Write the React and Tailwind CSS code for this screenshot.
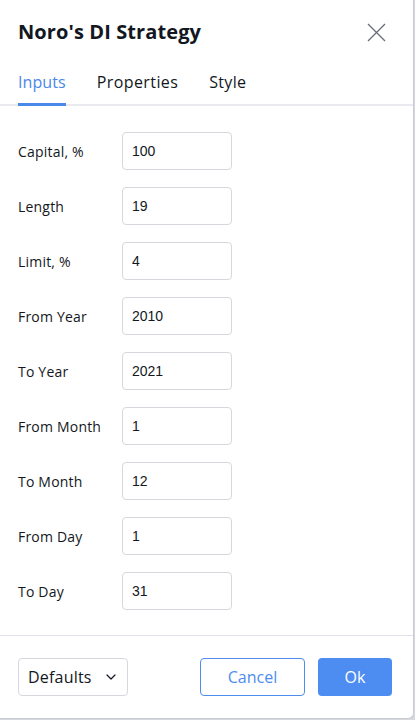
import { ChevronDown } from 'lucide-react';

const rows = [
  ['Capital, %', '100'],
  ['Length', '19'],
  ['Limit, %', '4'],
  ['From Year', '2010'],
  ['To Year', '2021'],
  ['From Month', '1'],
  ['To Month', '12'],
  ['From Day', '1'],
  ['To Day', '31'],
];

export default function App() {
  return (
    <div className="w-[415px] h-[720px] bg-[#d6d8de] overflow-hidden" style={{ fontFamily: '"Open Sans", "Noto Sans", sans-serif' }}>
      <div className="w-[414px] h-[719px] bg-white border-r border-b border-[#c9ccd4] rounded-br-md flex flex-col text-[#131722]">
        <div className="h-[64px] flex items-center justify-between pl-[18px] pr-[27px]">
          <h1 className="text-[20px] font-bold tracking-[0.1px]">Noro's DI Strategy</h1>
          <svg width="19" height="19" viewBox="0 0 19 19" className="text-[#6a6d78]">
            <path d="M1 1L18 18M18 1L1 18" stroke="currentColor" strokeWidth="1.3" fill="none" />
          </svg>
        </div>
        <div className="flex px-[18px] border-b-2 border-[#e8eaef] h-[42px] text-[16px]">
          <div className="relative text-[#4a88ea] pt-[6px] tracking-[0.1px]">
            Inputs
            <div className="absolute left-0 right-0 bottom-[-2px] h-[3px] bg-[#4a88ea]" />
          </div>
          <div className="pt-[6px] ml-[31px] tracking-[0.4px]">Properties</div>
          <div className="pt-[6px] ml-[31px] tracking-[0.3px]">Style</div>
        </div>
        <div className="flex-1 flex flex-col gap-[17px] pt-[26px] pl-[18px]">
          {rows.map(([label, value]) => (
            <div key={label} className="flex items-center h-[38px]">
              <div className="w-[104px] text-[14px] tracking-[0.2px]">{label}</div>
              <div className="w-[110px] h-[38px] border border-[#d6d8de] rounded-[4px] flex items-center px-[9px] text-[14px]" style={{ fontFamily: '"Liberation Sans", Arial, sans-serif' }}>
                {value}
              </div>
            </div>
          ))}
        </div>
        <div className="border-t border-[#e0e3eb] h-[83px] flex items-center px-[18px]">
          <div className="w-[110px] h-[38px] border border-[#d6d8de] rounded-[4px] flex items-center justify-between pl-[9px] pr-[8px] text-[16px] tracking-[0.2px]">
            Defaults
            <ChevronDown className="w-[16px] h-[16px]" strokeWidth={1.8} />
          </div>
          <div className="ml-auto flex gap-[13px] mr-[3px]">
            <div className="w-[105px] h-[38px] border border-[#4d8cf0] rounded-[4px] flex items-center justify-center text-[16px] text-[#4d8cf0]">Cancel</div>
            <div className="w-[74px] h-[38px] bg-[#4d8cf0] rounded-[4px] flex items-center justify-center text-[16px] text-white">Ok</div>
          </div>
        </div>
      </div>
    </div>
  );
}
